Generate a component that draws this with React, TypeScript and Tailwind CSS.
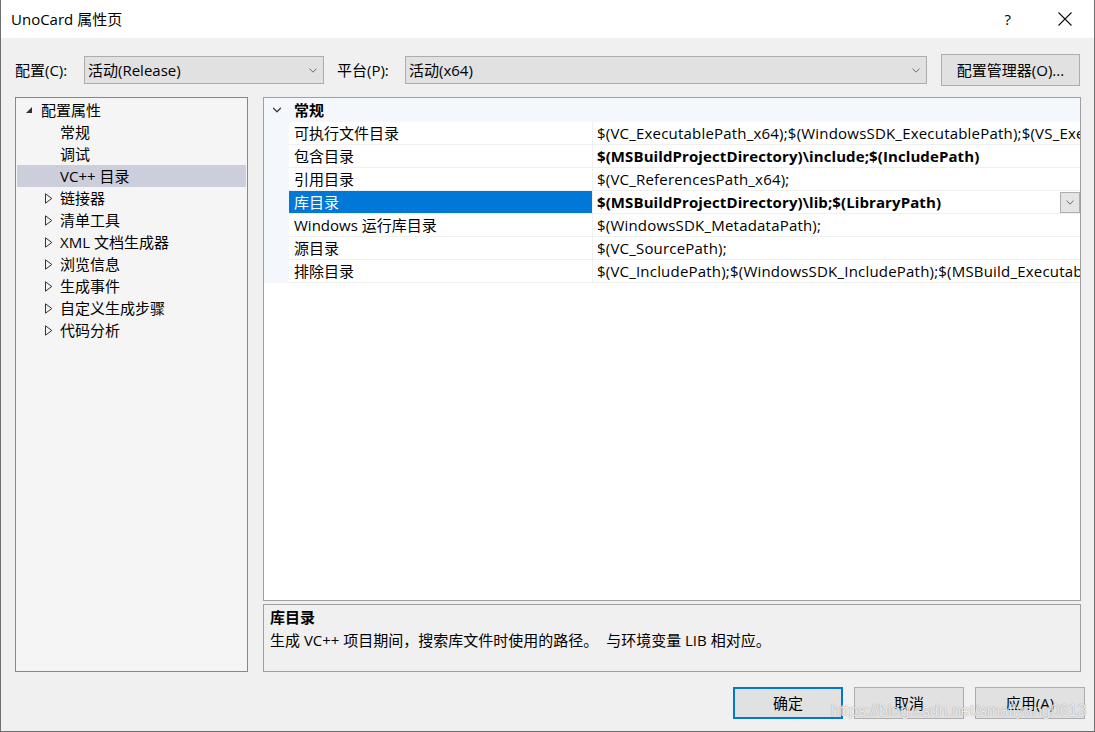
import { ChevronDown } from 'lucide-react';

const font = "font-['Open_Sans','Noto_Sans_CJK_SC',sans-serif]";

const treeItems: { label: string; arrow: boolean; selected?: boolean }[] = [
  { label: '常规', arrow: false },
  { label: '调试', arrow: false },
  { label: 'VC++ 目录', arrow: false, selected: true },
  { label: '链接器', arrow: true },
  { label: '清单工具', arrow: true },
  { label: 'XML 文档生成器', arrow: true },
  { label: '浏览信息', arrow: true },
  { label: '生成事件', arrow: true },
  { label: '自定义生成步骤', arrow: true },
  { label: '代码分析', arrow: true },
];

const props: { name: string; value: string; bold?: boolean; selected?: boolean }[] = [
  {
    name: '可执行文件目录',
    value: '$(VC_ExecutablePath_x64);$(WindowsSDK_ExecutablePath);$(VS_ExecutablePath);$(MSBuild_ExecutablePath);$(FxCopDir);$(PATH);',
  },
  { name: '包含目录', value: '$(MSBuildProjectDirectory)\\include;$(IncludePath)', bold: true },
  { name: '引用目录', value: '$(VC_ReferencesPath_x64);' },
  { name: '库目录', value: '$(MSBuildProjectDirectory)\\lib;$(LibraryPath)', bold: true, selected: true },
  { name: 'Windows 运行库目录', value: '$(WindowsSDK_MetadataPath);' },
  { name: '源目录', value: '$(VC_SourcePath);' },
  {
    name: '排除目录',
    value: '$(VC_IncludePath);$(WindowsSDK_IncludePath);$(MSBuild_ExecutablePath);$(VC_LibraryPath_x64);',
  },
];

function SmallChevron({ className = '' }: { className?: string }) {
  return (
    <svg width="8" height="5" viewBox="0 0 8 5" className={className}>
      <path d="M0.5 0.6 L4 4.2 L7.5 0.6" fill="none" stroke="#6b6b6b" strokeWidth="1" />
    </svg>
  );
}

function Combo({ text, width }: { text: string; width: string }) {
  return (
    <div className={`${width} h-[28px] flex items-center justify-between bg-[#e1e1e1] border border-[#adadad] pl-[3px] pr-[6px]`}>
      <span className="text-[15px] leading-none text-black">{text}</span>
      <SmallChevron />
    </div>
  );
}

function Button({ label, primary = false }: { label: string; primary?: boolean }) {
  return (
    <div
      className={`w-[110px] h-[32px] flex items-center justify-center bg-[#e1e1e1] text-[15px] text-black ${
        primary ? 'border-2 border-[#0078d7]' : 'border border-[#adadad]'
      }`}
    >
      {label}
    </div>
  );
}

export default function App() {
  return (
    <div className={`${font} relative w-[1095px] h-[732px] overflow-hidden bg-[#f0f0f0] border-x border-b border-[#6f6f6f] flex flex-col text-black`}>
      {/* title bar */}
      <div className="h-[38px] bg-white flex items-center justify-between pl-[10px] pr-[22px] shrink-0">
        <span className="text-[15px]">UnoCard 属性页</span>
        <div className="flex items-center gap-[47px]">
          <span className="text-[15px]">?</span>
          <svg width="14" height="14" viewBox="0 0 14 14">
            <path d="M0.5 0.5 L13.5 13.5 M13.5 0.5 L0.5 13.5" stroke="#111" strokeWidth="1.1" />
          </svg>
        </div>
      </div>

      {/* configuration row */}
      <div className="mt-[16px] h-[32px] flex items-center pl-[14px] text-[15px]">
        <span className="w-[69px]">配置(C):</span>
        <Combo text="活动(Release)" width="w-[240px]" />
        <span className="ml-[13px] w-[68px]">平台(P):</span>
        <Combo text="活动(x64)" width="w-[522px]" />
        <div className="ml-[14px] w-[139px] h-[32px] flex items-center justify-center bg-[#e1e1e1] border border-[#adadad]">
          配置管理器(O)...
        </div>
      </div>

      {/* main area */}
      <div className="mt-[11px] flex gap-[15px] pl-[14px] pr-[13px] h-[575px]">
        {/* tree */}
        <div className="w-[233px] h-full border border-[#828790] bg-[#f5f5f5] pt-[1px] px-[1px] text-[15px]">
          <div className="h-[22px] flex items-center pl-[8px]">
            <svg width="8" height="8" viewBox="0 0 8 8" className="mr-[8px]">
              <path d="M7 1 L7 7 L1 7 Z" fill="#333" />
            </svg>
            <span>配置属性</span>
          </div>
          {treeItems.map((it) => (
            <div
              key={it.label}
              className={`h-[22px] flex items-center ${it.selected ? 'bg-[#cccedb]' : ''} ${
                it.arrow ? 'pl-[28px]' : 'pl-[43px]'
              }`}
            >
              {it.arrow && (
                <svg width="8" height="11" viewBox="0 0 8 11" className="mr-[7px]">
                  <path d="M0.5 0.8 L6.8 5.5 L0.5 10.2 Z" fill="none" stroke="#333" strokeWidth="1" />
                </svg>
              )}
              <span>{it.label}</span>
            </div>
          ))}
        </div>

        {/* right column */}
        <div className="flex-1 flex flex-col gap-[3px] min-w-0">
          <div className="h-[504px] border border-[#a0a0a0] bg-white text-[15px] overflow-hidden">
            <div className="h-[24px] flex items-center bg-[#f4f7fc]">
              <div className="w-[25px] flex justify-center">
                <ChevronDown size={14} strokeWidth={2.2} color="#3c3c3c" />
              </div>
              <span className="pl-[5px] font-bold">常规</span>
            </div>
            {props.map((p) => (
              <div key={p.name} className="h-[23px] flex">
                <div className="w-[25px] bg-[#f4f7fc] shrink-0" />
                <div className="flex-1 flex border-b border-[#f0f0f0] min-w-0">
                  <div
                    className={`w-[304px] shrink-0 flex items-center pl-[5px] border-r border-[#f0f0f0] ${
                      p.selected ? 'bg-[#0078d7] text-white' : ''
                    }`}
                  >
                    {p.name}
                  </div>
                  <div className="flex-1 flex items-center min-w-0 pl-[4px]">
                    <span
                      className={`flex-1 whitespace-nowrap overflow-hidden ${
                        p.bold ? 'font-bold tracking-[0.1px]' : 'tracking-[0.2px]'
                      }`}
                    >
                      {p.value}
                    </span>
                    {p.selected && (
                      <div className="w-[20px] h-[21px] shrink-0 flex items-center justify-center bg-[#e5e5e5] border border-[#adadad]">
                        <SmallChevron />
                      </div>
                    )}
                  </div>
                </div>
              </div>
            ))}
          </div>

          <div className="h-[68px] border border-[#a0a0a0] bg-[#f0f0f0] pl-[6px] pt-[1px] text-[15px] leading-[23px]">
            <div className="font-bold">库目录</div>
            <div>生成 VC++ 项目期间，搜索库文件时使用的路径。{'\u00a0\u00a0'}与环境变量 LIB 相对应。</div>
          </div>
        </div>
      </div>

      {/* buttons */}
      <div className="mt-[15px] flex justify-end gap-[11px] pr-[9px]">
        <Button label="确定" primary />
        <Button label="取消" />
        <Button label="应用(A)" />
      </div>

      {/* watermark */}
      <span className="absolute left-[830px] top-[699px] font-['Liberation_Sans',sans-serif] text-[16px] text-white/85 [text-shadow:0_0_1px_rgba(0,0,0,0.5)]">
        https://blog.csdn.net/smallyang0613
      </span>
    </div>
  );
}
